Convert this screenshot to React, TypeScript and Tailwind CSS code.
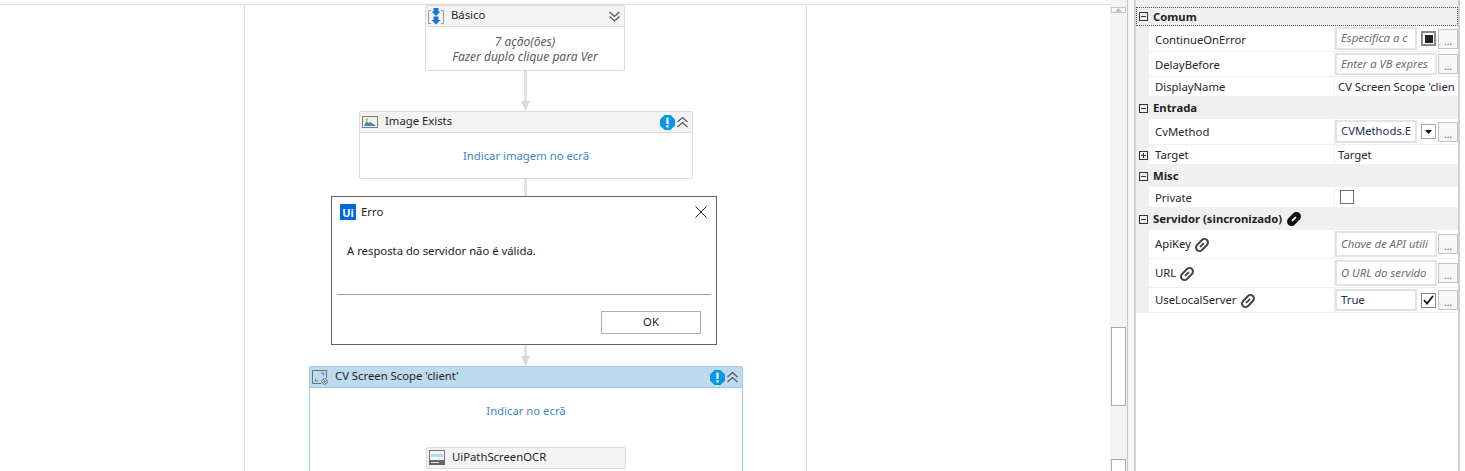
import { ReactNode } from 'react';

const fontStack = { fontFamily: '"Noto Sans", "Open Sans", sans-serif' };

function Connector({ top, height, arrow }: { top: number; height: number; arrow?: boolean }) {
  return (
    <div className="absolute left-[523px] w-[5px] flex flex-col items-center" style={{ top, height }}>
      <div className="w-[3px] flex-1 bg-[#e2e2e2]" />
      {arrow && (
        <svg width="9" height="10" viewBox="0 0 9 10" className="shrink-0">
          <path d="M0 0h9L4.5 10z" fill="#d8d8d8" />
        </svg>
      )}
    </div>
  );
}

function Chevrons({ down }: { down?: boolean }) {
  return (
    <svg width="13" height="13" viewBox="0 0 13 13" fill="none" stroke="#555" strokeWidth="1.2">
      {down ? (
        <>
          <path d="M1.5 2l5 4.5 5-4.5" />
          <path d="M1.5 6.5l5 4.5 5-4.5" />
        </>
      ) : (
        <>
          <path d="M1.5 6l5-4.5 5 4.5" />
          <path d="M1.5 11l5-4.5 5 4.5" />
        </>
      )}
    </svg>
  );
}

function AlertIcon() {
  return (
    <svg width="15" height="15" viewBox="0 0 15 15">
      <path d="M4.5 0h6L15 4.5v6L10.5 15h-6L0 10.5v-6z" fill="#0b97e6" />
      <rect x="6.4" y="2.6" width="2.2" height="6.4" fill="#fff" />
      <rect x="6.4" y="10.2" width="2.2" height="2.2" fill="#fff" />
    </svg>
  );
}

function SequenceIcon() {
  return (
    <svg width="16" height="17" viewBox="0 0 16 17" fill="none">
      <path d="M3 2.5H0.5v13H3M13 2.5h2.5v13H13" stroke="#9a9a9a" />
      <path d="M5.5 0h5v3.5h2L8 8 3.5 3.5h2z" fill="#1976d2" />
      <path d="M5.5 8.5h5V12h2L8 16.5 3.5 12h2z" fill="#1976d2" />
    </svg>
  );
}

function ImageIcon() {
  return (
    <svg width="16" height="12" viewBox="0 0 16 12">
      <rect x="0.5" y="0.5" width="15" height="11" fill="#f0f0f0" stroke="#7d7d7d" />
      <rect x="2" y="2" width="12" height="8" fill="#f5efdc" />
      <path d="M2 10l2.5-5 2 2 1.5-1 4 2.5 2 1.5z" fill="#3b88c3" />
      <circle cx="5" cy="3.6" r="1.2" fill="#c9a45a" />
    </svg>
  );
}

function ScopeIcon() {
  return (
    <svg width="16" height="15" viewBox="0 0 16 15" fill="none">
      <path d="M14.5 8V0.5H0.5v13H9" stroke="#6a7278" />
      <path d="M3.5 8.5v2.5H6M11.5 3v2.5M9 3h2.5" stroke="#6a7278" />
      <circle cx="12.5" cy="11.5" r="2.6" fill="#fff" stroke="#5d6a75" strokeWidth="1.4" strokeDasharray="1.4 0.6" />
      <circle cx="12.5" cy="11.5" r="1.2" fill="#2f7fc9" />
    </svg>
  );
}

function OcrIcon() {
  return (
    <svg width="16" height="15" viewBox="0 0 16 15">
      <rect x="0.5" y="0.5" width="15" height="14" fill="#f4f4f4" stroke="#777" />
      <rect x="2" y="4" width="12" height="3" fill="#a9dcf2" />
      <rect x="0" y="10" width="16" height="5" fill="#666" />
      <rect x="2" y="12" width="8" height="1" fill="#ddd" />
    </svg>
  );
}

function UiLogo() {
  return (
    <div className="w-4 h-4 bg-[#0067df] flex items-center justify-center text-white text-[11px] font-bold leading-none">
      Ui
    </div>
  );
}

function NodeHeader({ icon, title, children, color }: { icon: ReactNode; title: string; children: ReactNode; color: string }) {
  return (
    <div className={`h-[21px] flex items-center border-b ${color}`}>
      <div className="w-[25px] pl-[2px] flex shrink-0">{icon}</div>
      <span className="flex-1 text-[11.3px] text-[#1e1e1e] pb-[2px]">{title}</span>
      <div className="flex items-center pr-[3px] gap-[1px]">{children}</div>
    </div>
  );
}

function Canvas() {
  return (
    <div className="relative w-[1110px] h-[471px] overflow-hidden bg-white">
      <div className="h-[5px] border-b border-[#dcdcdc]" />
      <div className="absolute left-[244px] top-[5px] bottom-0 w-px bg-[#dcdcdc]" />
      <div className="absolute left-[806px] top-[5px] bottom-0 w-px bg-[#dcdcdc]" />

      <Connector top={71} height={40} arrow />
      <Connector top={179} height={20} />
      <Connector top={345} height={21} arrow />

      {/* Básico */}
      <div className="absolute left-[425px] top-[5px] w-[200px] h-[66px] border border-[#dcdcdc] rounded-[2px] bg-white">
        <NodeHeader icon={<SequenceIcon />} title="Básico" color="bg-[#f3f3f3] border-[#dcdcdc]">
          <Chevrons down />
        </NodeHeader>
        <div className="text-center text-[12px] italic text-[#5c5c5c] leading-[15px] pt-[7px]">
          <div>7 ação(ões)</div>
          <div>Fazer duplo clique para Ver</div>
        </div>
      </div>

      {/* Image Exists */}
      <div className="absolute left-[359px] top-[111px] w-[334px] h-[68px] border border-[#dcdcdc] rounded-[2px] bg-white">
        <NodeHeader icon={<ImageIcon />} title="Image Exists" color="bg-[#f3f3f3] border-[#dcdcdc]">
          <AlertIcon />
          <Chevrons />
        </NodeHeader>
        <div className="text-center text-[11.3px] text-[#3d87c6] pt-[15px]">Indicar imagem no ecrã</div>
      </div>

      {/* CV Screen Scope */}
      <div className="absolute left-[309px] top-[366px] w-[434px] h-[120px] border border-[#9ccbe9] rounded-[2px] bg-white">
        <NodeHeader icon={<ScopeIcon />} title="CV Screen Scope 'client'" color="bg-[#bedaee] border-[#9ccbe9]">
          <AlertIcon />
          <Chevrons />
        </NodeHeader>
        <div className="text-center text-[11.3px] text-[#3d87c6] pt-[15px]">Indicar no ecrã</div>
        <div className="mt-[27px] ml-[116px] w-[200px] h-[22px] flex items-center bg-[#f3f3f3] border border-[#dcdcdc] rounded-[2px]">
          <div className="w-[25px] pl-[2px] flex">
            <OcrIcon />
          </div>
          <span className="text-[11.3px] text-[#1e1e1e]">UiPathScreenOCR</span>
        </div>
      </div>

      {/* Erro dialog */}
      <div className="absolute left-[331px] top-[196px] w-[386px] h-[149px] border border-[#646464] bg-white flex flex-col">
        <div className="h-[30px] flex items-center pl-[8px] pr-[9px]">
          <UiLogo />
          <span className="ml-[5px] text-[11.3px] text-[#1a1a1a] flex-1">Erro</span>
          <svg width="12" height="12" viewBox="0 0 12 12" stroke="#222" fill="none" strokeWidth="1">
            <path d="M0.5 0.5l11 11M11.5 0.5l-11 11" />
          </svg>
        </div>
        <div className="pl-[15px] pt-[15px] h-[67px] text-[11.3px] text-[#1a1a1a] leading-[17px]">
          A resposta do servidor não é válida.
        </div>
        <div className="mx-[5px] h-px bg-[#a0a0a0]" />
        <div className="flex justify-end pr-[15px] pt-[16px]">
          <div className="w-[100px] h-[23px] border border-[#adadad] flex items-center justify-center text-[11.3px] text-[#1a1a1a]">
            OK
          </div>
        </div>
      </div>
    </div>
  );
}

function ScrollBar() {
  return (
    <div className="w-[17px] h-[471px] bg-[#f3f3f3] flex flex-col items-center overflow-hidden">
      <div className="mt-[7px] w-[15px] h-[14px] border border-[#c8c8c8] bg-[#f7f7f7] flex items-center justify-center">
        <svg width="7" height="4" viewBox="0 0 7 4">
          <path d="M3.5 0L7 4H0z" fill="#bdbdbd" />
        </svg>
      </div>
      <div className="mt-[314px] w-[15px] h-[79px] border border-[#ababab] bg-white shrink-0" />
      <div className="mt-[53px] w-[15px] h-[14px] border border-[#ababab] bg-white shrink-0" />
    </div>
  );
}

function LinkIcon({ dark }: { dark?: boolean }) {
  return (
    <svg width="14" height="14" viewBox="0 0 14 14" className="shrink-0">
      <g transform="rotate(-45 7 7)">
        <rect x="-1" y="2.5" width="16" height="9" rx="4.5" fill={dark ? '#111' : '#444'} />
        <rect x="1" y="4.5" width="12" height="5" rx="2.5" fill={dark ? '#111' : '#fff'} />
        <rect x="4" y="6" width="6" height="2" rx="1" fill={dark ? '#fff' : '#444'} />
      </g>
    </svg>
  );
}

function Group({ title, extra, h, focus }: { title: string; extra?: ReactNode; h: string; focus?: boolean }) {
  return (
    <div className={`${h} flex items-center pl-[3px] ${focus ? 'outline outline-1 -outline-offset-1 outline-dotted outline-[#555]' : ''}`}>
      <Toggle sign="minus" />
      <span className="ml-[5px] text-[11.3px] font-bold text-[#1e1e1e] pt-[1px]">{title}</span>
      {extra && <span className="ml-[5px]">{extra}</span>}
    </div>
  );
}

function Toggle({ sign }: { sign: 'minus' | 'plus' }) {
  return (
    <svg width="9" height="9" viewBox="0 0 9 9" fill="none" stroke="#333" className="shrink-0">
      <rect x="0.5" y="0.5" width="8" height="8" />
      <path d="M2 4.5h5" />
      {sign === 'plus' && <path d="M4.5 2v5" />}
    </svg>
  );
}

function Dots() {
  return (
    <div className="ml-auto w-[20px] h-[20px] border border-[#c4c4c4] bg-[#f7f7f7] flex items-end justify-center text-[10px] leading-[13px] text-[#666] shrink-0">
      ...
    </div>
  );
}

function Input({ text, wide, dark }: { text: string; wide?: boolean; dark?: boolean }) {
  return (
    <div
      className={`${wide ? 'w-[102px]' : 'w-[82px]'} h-full border-2 border-[#e3e3e3] pl-[4px] flex items-center whitespace-nowrap text-[11.3px] shrink-0 ${
        dark ? 'text-[#24304a]' : 'italic text-[#6e6e6e]'
      }`}
    >
      {text}
    </div>
  );
}

function Row({ label, h, icon, plus, low, children }: { label: string; h: string; icon?: boolean; plus?: boolean; low?: boolean; children: ReactNode }) {
  return (
    <div className={`${h} flex`}>
      <div className="w-[13px] flex items-center pl-[3px] shrink-0">{plus && <Toggle sign="plus" />}</div>
      <div
        className={`w-[186px] bg-white border-b border-b-[#f0f0f0] border-r border-r-[#f0f0f0] flex items-center gap-[4px] pl-[6px] text-[11.3px] text-[#262626] ${
          low ? 'pt-[3px]' : 'pt-[1px]'
        }`}
      >
        {label}
        {icon && <LinkIcon />}
      </div>
      <div className="w-[123px] bg-white border-b border-[#f0f0f0] flex items-center py-[1px] whitespace-nowrap text-[11.3px] text-[#262626]">
        {children}
      </div>
    </div>
  );
}

function Properties() {
  return (
    <div className="w-[331px] h-[471px] border-l-2 border-[#d0d0d0] bg-white flex">
      <div className="w-[322px] h-[471px]">
        <div className="bg-[#f0f0f0]">
          <div className="h-[7px]" />
          <Group title="Comum" h="h-[19px]" focus />
          <Row label="ContinueOnError" h="h-[26px]" low>
            <Input text="Especifica a c" />
            <div className="ml-[4px] w-[15px] h-[15px] border-2 border-[#8a8a8a] flex items-center justify-center shrink-0">
              <div className="w-[8px] h-[8px] bg-[#222]" />
            </div>
            <Dots />
          </Row>
          <Row label="DelayBefore" h="h-[25px]" low>
            <Input text="Enter a VB expres" wide />
            <Dots />
          </Row>
          <Row label="DisplayName" h="h-[20px]">
            <span className="pl-[3px] pt-[1px]">CV Screen Scope 'clien</span>
          </Row>
          <Group title="Entrada" h="h-[22px]" />
          <Row label="CvMethod" h="h-[26px]">
            <Input text="CVMethods.E" dark />
            <div className="ml-[4px] w-[15px] h-[15px] border border-[#aaa] flex items-center justify-center shrink-0">
              <svg width="7" height="4" viewBox="0 0 7 4">
                <path d="M0 0h7L3.5 4z" fill="#111" />
              </svg>
            </div>
            <Dots />
          </Row>
          <Row label="Target" h="h-[20px]" plus>
            <span className="pl-[3px] pt-[1px]">Target</span>
          </Row>
          <Group title="Misc" h="h-[22px]" />
          <Row label="Private" h="h-[21px]" low>
            <div className="ml-[5px] w-[14px] h-[14px] border border-[#707070] bg-white" />
          </Row>
          <Group title="Servidor (sincronizado)" h="h-[22px]" extra={<LinkIcon dark />} />
          <Row label="ApiKey" h="h-[29px]" icon>
            <Input text="Chave de API utili" wide />
            <Dots />
          </Row>
          <Row label="URL" h="h-[29px]" icon>
            <Input text="O URL do servido" wide />
            <Dots />
          </Row>
          <Row label="UseLocalServer" h="h-[25px]" icon>
            <Input text="True" dark />
            <div className="ml-[4px] w-[15px] h-[15px] border border-[#888] flex items-center justify-center shrink-0">
              <svg width="11" height="10" viewBox="0 0 11 10" fill="none" stroke="#111" strokeWidth="1.8">
                <path d="M1 5l3 3.5L10 1" />
              </svg>
            </div>
            <Dots />
          </Row>
        </div>
      </div>
      <div className="w-[2px] h-[471px] bg-[#d0d0d0]" />
    </div>
  );
}

export default function App() {
  return (
    <div className="w-[1465px] h-[471px] overflow-hidden flex bg-white" style={fontStack}>
      <Canvas />
      <ScrollBar />
      <div className="w-[1px] bg-[#c8c8c8]" />
      <div className="w-[6px] bg-[#f5f5f5]" />
      <Properties />
    </div>
  );
}
